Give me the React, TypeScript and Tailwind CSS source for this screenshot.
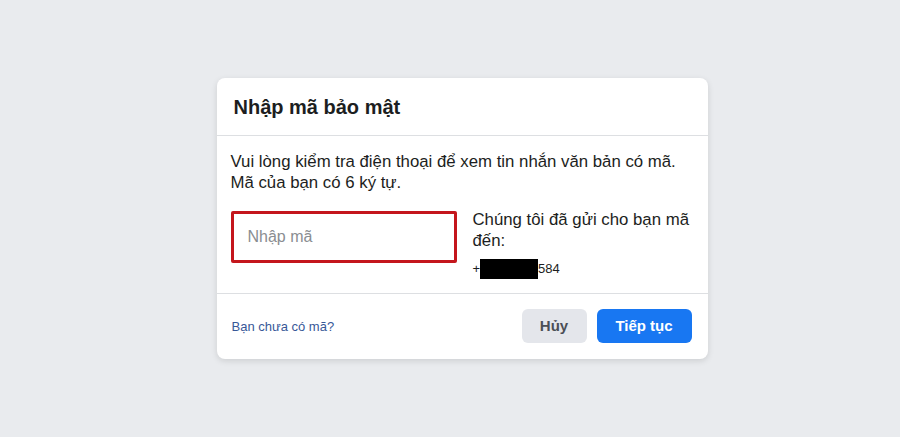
export default function App() {
  return (
    <div
      className="w-full h-[437px] bg-[#e9ebee] flex items-start justify-center pt-[78px] pl-[24px]"
      style={{ fontFamily: '"Liberation Sans", Arial, sans-serif' }}
    >
      <div className="w-[491px] bg-white rounded-lg shadow-[0_2px_6px_rgba(0,0,0,0.12)]">
        {/* header */}
        <div className="h-[58px] pl-[17px] pr-4 flex items-center border-b border-[#dddfe2]">
          <h2 className="text-[20px] font-bold text-[#1c1e21]">Nhập mã bảo mật</h2>
        </div>

        {/* body */}
        <div className="px-[14px] pt-[15px] pb-[14px] border-b border-[#dddfe2]">
          <p className="text-[16.8px] leading-[21px] text-[#1c1e21] whitespace-nowrap">
            Vui lòng kiểm tra điện thoại để xem tin nhắn văn bản có mã.
            <br />
            Mã của bạn có 6 ký tự.
          </p>
          <div className="flex gap-4 mt-[16px]">
            <div className="w-[226px] h-[52px] mt-[2px] border-[3px] border-[#c4161c] rounded-[2px] flex items-center px-[14px] shrink-0">
              <span className="text-[16px] text-[#8a8d91]">Nhập mã</span>
            </div>
            <div className="text-[16.8px] leading-[21px] text-[#1c1e21] whitespace-nowrap">
              <p>
                Chúng tôi đã gửi cho bạn mã
                <br />
                đến:
              </p>
              <div className="flex items-center mt-[8px] text-[13px] leading-[20px]">
                <span>+</span>
                <span className="inline-block w-[58px] h-[20px] bg-black" />
                <span>584</span>
              </div>
            </div>
          </div>
        </div>

        {/* footer */}
        <div className="flex items-center justify-between pl-[15px] pr-[16px] pt-[15px] pb-4">
          <a className="text-[13px] text-[#385898] pt-[2px]">Bạn chưa có mã?</a>
          <div className="flex gap-[10px]">
            <button className="w-[65px] h-[34px] rounded-md bg-[#e4e6eb] text-[15px] font-bold text-[#4b4f56]">
              Hủy
            </button>
            <button className="w-[95px] h-[34px] rounded-md bg-[#1877f2] text-[15px] font-bold text-white">
              Tiếp tục
            </button>
          </div>
        </div>
      </div>
    </div>
  );
}
